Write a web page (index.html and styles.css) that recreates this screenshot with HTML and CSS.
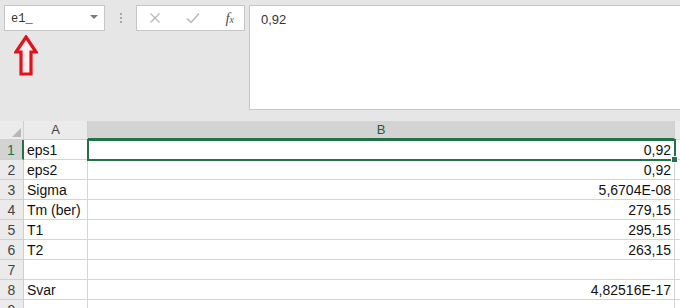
FILE: index.html
```html
<!DOCTYPE html>
<html lang="no">
<head>
    <meta charset="UTF-8">
    <title>Svar</title>
    <link rel="stylesheet" href="styles.css">
</head>
<body>

<div class="app">
    <div class="topbar">
        <div class="left-tools">
            <div class="tool-row">
                <div class="name-box">
                    <span class="name-text">e1_</span>
                    <svg class="drop" width="8" height="5" viewBox="0 0 8 5"><polygon points="0,0 8,0 4,4" fill="#7a7a7a"/></svg>
                </div>
                <div class="dots"><span></span><span></span><span></span></div>
                <div class="fx-buttons">
                    <svg width="12" height="12" viewBox="0 0 12 12"><path d="M1.5 1.5 L10.5 10.5 M10.5 1.5 L1.5 10.5" stroke="#b8b8b8" stroke-width="1.3" fill="none"/></svg>
                    <svg width="14" height="12" viewBox="0 0 14 12"><path d="M1 6.5 L5 10.5 L13 1.5" stroke="#b8b8b8" stroke-width="1.5" fill="none"/></svg>
                    <span class="fx">f<sub>x</sub></span>
                </div>
            </div>
            <svg class="arrow" width="24" height="42" viewBox="0 0 24 42">
                <polygon points="12,2 22,17 17,17 17,39 7,39 7,17 2,17" fill="#fbeef0" stroke="#e2121c" stroke-width="3.2" stroke-linejoin="miter"/>
            </svg>
        </div>
        <div class="formula">0,92</div>
    </div>

    <div class="sheet">
        <div class="corner"><span class="tri"></span></div>
        <div class="col-head">A</div>
        <div class="col-head active">B</div>
        <div class="col-rest head-rest"></div>

        <div class="row-head active">1</div>
        <div class="cell">eps1</div>
        <div class="cell num selected">0,92<span class="handle"></span></div>
        <div class="col-rest"></div>

        <div class="row-head">2</div>
        <div class="cell">eps2</div>
        <div class="cell num">0,92</div>
        <div class="col-rest"></div>

        <div class="row-head">3</div>
        <div class="cell">Sigma</div>
        <div class="cell num">5,6704E-08</div>
        <div class="col-rest"></div>

        <div class="row-head">4</div>
        <div class="cell">Tm (ber)</div>
        <div class="cell num">279,15</div>
        <div class="col-rest"></div>

        <div class="row-head">5</div>
        <div class="cell">T1</div>
        <div class="cell num">295,15</div>
        <div class="col-rest"></div>

        <div class="row-head">6</div>
        <div class="cell">T2</div>
        <div class="cell num">263,15</div>
        <div class="col-rest"></div>

        <div class="row-head">7</div>
        <div class="cell"></div>
        <div class="cell num"></div>
        <div class="col-rest"></div>

        <div class="row-head">8</div>
        <div class="cell">Svar</div>
        <div class="cell num">4,82516E-17</div>
        <div class="col-rest"></div>

        <div class="row-head">9</div>
        <div class="cell"></div>
        <div class="cell num"></div>
        <div class="col-rest"></div>
    </div>
</div>

</body>
</html>
```

FILE: styles.css
```css
body {
    margin: 0;
    background-color: #e6e6e6;
    font-family: "Liberation Sans", Arial, sans-serif;
    overflow: hidden;
}

.app {
    width: 680px;
    height: 308px;
    overflow: hidden;
}

/* name box + formula bar */
.topbar {
    display: flex;
    padding: 5px 0 0 4px;
    height: 105px;
}

.left-tools {
    width: 241px;
}

.tool-row {
    display: flex;
    align-items: center;
}

.name-box {
    width: 101px;
    height: 26px;
    box-sizing: border-box;
    background-color: #fff;
    border: 1px solid #c6c6c6;
    display: flex;
    align-items: center;
    justify-content: space-between;
    padding: 0 6px;
}

.name-text {
    font-family: "Liberation Mono", "DejaVu Sans Mono", monospace;
    font-size: 12px;
    color: #333;
    margin-top: 1px;
}

.drop {
    margin-top: -2px;
}

.dots {
    width: 31px;
    display: flex;
    flex-direction: column;
    align-items: center;
    gap: 2px;
}

.dots span {
    width: 2px;
    height: 2px;
    background-color: #a8a8a8;
}

.fx-buttons {
    width: 109px;
    height: 26px;
    box-sizing: border-box;
    background-color: #fff;
    border: 1px solid #c6c6c6;
    display: flex;
    align-items: center;
    justify-content: space-between;
    padding: 0 10px 0 12px;
}

.fx {
    font-family: "Liberation Serif", "Times New Roman", serif;
    font-style: italic;
    font-size: 15px;
    color: #555;
}

.fx sub {
    font-size: 10px;
    vertical-align: 0;
}

.arrow {
    display: block;
    margin: 4px 0 0 10px;
}

.formula {
    flex: 1;
    margin-left: 4px;
    background-color: #fff;
    border: 1px solid #c6c6c6;
    border-right: none;
    padding: 6px 11px;
    font-size: 13px;
    color: #333;
}

/* worksheet */
.sheet {
    margin-top: 11px;
    display: grid;
    grid-template-columns: 24px 64px 587px 5px;
    grid-template-rows: 19px repeat(9, 20px);
    background-color: #fff;
    font-size: 14px;
}

.corner {
    background-color: #ebebeb;
    border-right: 1px solid #d0d0d0;
    border-bottom: 1px solid #d0d0d0;
    position: relative;
}

.tri {
    position: absolute;
    right: 2px;
    bottom: 2px;
    width: 0;
    height: 0;
    border-left: 9px solid transparent;
    border-bottom: 9px solid #b8b8b8;
}

.col-head {
    background-color: #ebebeb;
    border-right: 1px solid #d0d0d0;
    border-bottom: 1px solid #d0d0d0;
    text-align: center;
    font-size: 13px;
    line-height: 18px;
    color: #444;
}

.col-head.active {
    background-color: #d3d3d3;
    color: #1f5c3b;
    border-bottom: 2px solid #217346;
    line-height: 17px;
}

.head-rest {
    background-color: #ebebeb;
    border-bottom: 1px solid #d0d0d0;
}

.row-head {
    background-color: #ebebeb;
    border-right: 1px solid #d0d0d0;
    border-bottom: 1px solid #d0d0d0;
    text-align: center;
    line-height: 20px;
    color: #444;
}

.row-head.active {
    background-color: #d3d3d3;
    border-right: 2px solid #217346;
    color: #217346;
}

.cell {
    border-right: 1px solid #d4d4d4;
    border-bottom: 1px solid #d4d4d4;
    padding: 0 3px;
    line-height: 20px;
    color: #111;
    white-space: nowrap;
}

.cell.num {
    text-align: right;
}

.col-rest {
    border-bottom: 1px solid #d4d4d4;
}

.selected {
    position: relative;
    outline: 2px solid #217346;
    outline-offset: -1px;
}

.handle {
    position: absolute;
    right: -4px;
    bottom: -4px;
    width: 5px;
    height: 5px;
    background-color: #217346;
    border: 1px solid #fff;
}
```
